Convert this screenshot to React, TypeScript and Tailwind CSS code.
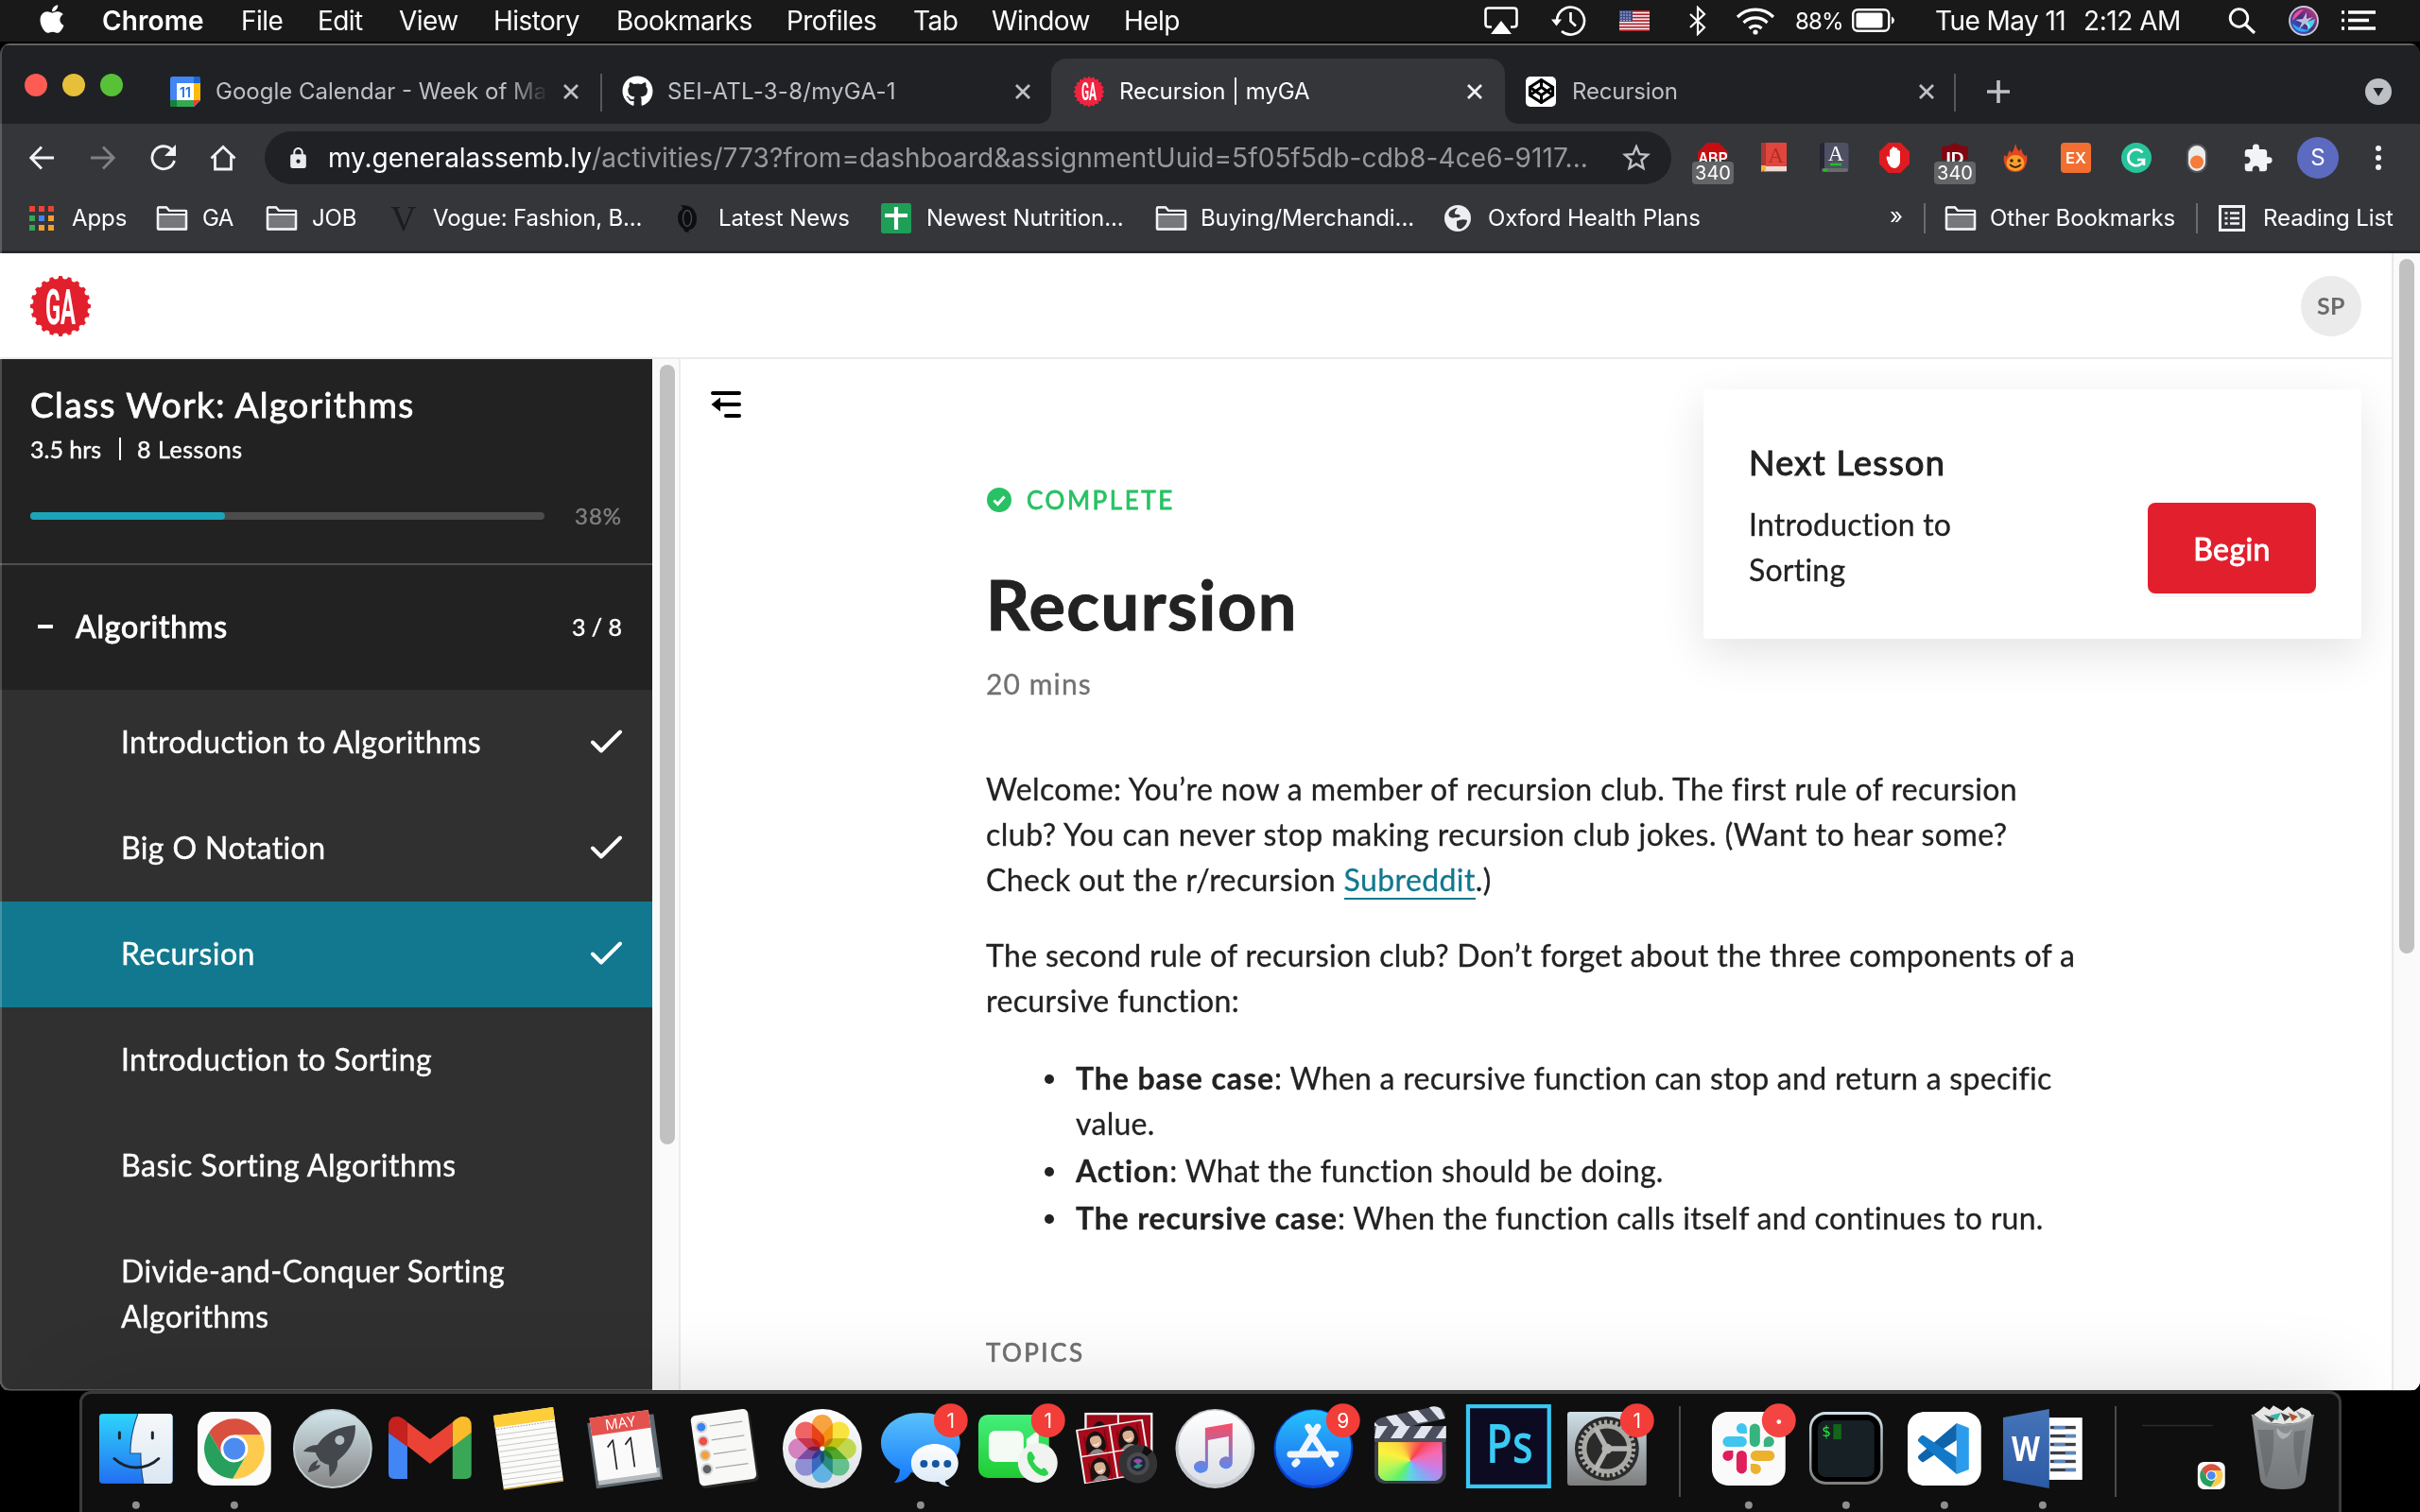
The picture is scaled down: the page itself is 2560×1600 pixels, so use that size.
import type { ReactNode } from "react";
import { FaApple, FaGithub } from "react-icons/fa";
import { MdExtension, MdStarBorder, MdLock } from "react-icons/md";
import { Codepen } from "lucide-react";

/* ---------- shared drawings ---------- */

function ChromeDisc() {
  return (
    <g>
      <path d="M-26.8-17.4A32 32 0 0 1 28.5-14.5L0-14.5L-12.6 7.25Z" fill="#d9503f" />
      <path d="M28.5-14.5A32 32 0 0 1-1.7 31.9L12.6 7.25L0-14.5Z" fill="#fdcb4e" />
      <path d="M-1.7 31.9A32 32 0 0 1-26.8-17.4L-12.6 7.25L12.6 7.25Z" fill="#26a05c" />
      <circle r="14.5" fill="#fff" />
      <circle r="11.6" fill="#4c8bf0" />
    </g>
  );
}

function GaBadge({ size, notches, bg, color }: { size: number; notches: number; bg: string; color: string }) {
  const marks = Array.from({ length: notches }, (_, i) => ((i + 0.5) * 2 * Math.PI) / notches);
  return (
    <svg width={size} height={size} viewBox="-32 -32 64 64" className="shrink-0">
      <circle r="32" fill={color} />
      {marks.map((a) => (
        <circle key={a} cx={Math.sin(a) * 32} cy={Math.cos(a) * 32} r="3" fill={bg} />
      ))}
      <text
        x="-16"
        y="18.5"
        fontFamily="Roboto"
        fontWeight="700"
        fontSize="52"
        textLength="32"
        lengthAdjust="spacingAndGlyphs"
        fill="#fff"
      >
        GA
      </text>
    </svg>
  );
}

function Folder() {
  return (
    <svg width="34" height="26" viewBox="0 0 34 26" className="shrink-0">
      <path d="M2 24V2.5Q2 1.5 3 1.5H11L14 5H31Q32 5 32 6V24Q32 24.5 31.5 24.5H2.5Q2 24.5 2 24Z" fill="#76777a" stroke="#f1f3f4" strokeWidth="2.4" />
      <path d="M2.5 2.5H11L13 5.5H31V8H2.5Z" fill="#35363a" />
      <path d="M2 9H32M2 24V2.5Q2 1.5 3 1.5H11L14 5H32V24.5H2" fill="none" stroke="#f1f3f4" strokeWidth="2.2" />
    </svg>
  );
}

function Close({ bright }: { bright?: boolean }) {
  return (
    <svg width="18" height="18" viewBox="0 0 18 18" className="shrink-0">
      <path d="M2 2L16 16M16 2L2 16" stroke={bright ? "#f1f3f4" : "#bdc1c6"} strokeWidth="2.8" />
    </svg>
  );
}

/* ---------- menu bar ---------- */

function MenuBar() {
  const t = "shrink-0 whitespace-nowrap";
  return (
    <div className="flex h-[44px] items-center bg-[#191919] pl-[38px] text-[28px] leading-[45px] tracking-[-0.02em] text-white">
      <div className="w-[70px] shrink-0">
        <FaApple size={34} className="-mt-[4px]" />
      </div>
      <div className={t + " w-[147px] font-semibold tracking-[0.004em]"}>Chrome</div>
      <div className={t + " w-[81px]"}>File</div>
      <div className={t + " w-[86px]"}>Edit</div>
      <div className={t + " w-[100px]"}>View</div>
      <div className={t + " w-[130px]"}>History</div>
      <div className={t + " w-[180px]"}>Bookmarks</div>
      <div className={t + " w-[134px]"}>Profiles</div>
      <div className={t + " w-[83px]"}>Tab</div>
      <div className={t + " w-[140px]"}>Window</div>
      <div className={t + " w-[381px]"}>Help</div>
      <svg width="36" height="30" viewBox="0 0 36 30" className="shrink-0">
        <path d="M8 21.500H4.500Q1.500 21.500 1.500 18.500V4.500Q1.500 1.500 4.500 1.500H31.500Q34.500 1.500 34.500 4.500V18.500Q34.500 21.500 31.500 21.500H28" fill="none" stroke="#fff" strokeWidth="2.600" />
        <path d="M18 15L29 29H7Z" fill="#fff" />
      </svg>
      <svg width="38" height="34" viewBox="0 0 38 34" className="ml-[34px] shrink-0">
        <path d="M7 17A14.500 14.500 0 1 1 12 28" fill="none" stroke="#fff" strokeWidth="2.600" />
        <path d="M1 15.500H12L6.500 22.500Z" fill="#fff" />
        <path d="M21.500 8V17.500L27 22.500" fill="none" stroke="#fff" strokeWidth="2.600" />
      </svg>
      <svg width="32" height="22" viewBox="0 0 32 22" className="ml-[35px] shrink-0">
        <rect width="32" height="22" fill="#f2f2f2" />
        {[0, 1, 2, 3, 4, 5, 6].map((i) => (
          <rect key={i} y={i * 3.38} width="32" height="1.7" fill="#b3202c" />
        ))}
        <rect width="14" height="12" fill="#3f4a86" />
        {[2, 5, 8, 11].map((x) =>
          [2, 5, 8, 10.5].map((y) => <circle key={x + "-" + y} cx={x} cy={y} r="0.7" fill="#e8e8f0" />)
        )}
      </svg>
      <svg width="20" height="32" viewBox="0 0 20 32" className="ml-[41px] shrink-0">
        <path d="M2 9L17 23L10 30V2L17 9L2 23" fill="none" stroke="#fff" strokeWidth="2.200" />
      </svg>
      <svg width="42" height="30" viewBox="0 0 42 30" className="ml-[30px] shrink-0">
        <path d="M2 11A27 27 0 0 1 40 11M8.500 17A18 18 0 0 1 33.500 17M14.500 23A9.500 9.500 0 0 1 27.500 23" fill="none" stroke="#fff" strokeWidth="3.200" />
        <circle cx="21" cy="27" r="2.600" fill="#fff" />
      </svg>
      <div className={t + " ml-[21px] w-[60px] text-[24px] tracking-[-0.035em]"}>88%</div>
      <svg width="46" height="26" viewBox="0 0 46 26" className="shrink-0">
        <rect x="1.200" y="1.200" width="38" height="22.600" rx="5" fill="none" stroke="#fff" strokeWidth="2.400" />
        <rect x="4.500" y="4.500" width="28" height="16" rx="2" fill="#fff" />
        <path d="M42 8.500Q45 10 45 12.500Q45 15 42 16.500Z" fill="#fff" />
      </svg>
      <div className={t + " ml-[42px] w-[157px]"}>Tue May 11</div>
      <div className={t + " w-[153px] tracking-[-0.016em]"}>2:12 AM</div>
      <svg width="30" height="28" viewBox="0 0 30 28" className="shrink-0">
        <circle cx="11.500" cy="11" r="9.300" fill="none" stroke="#fff" strokeWidth="2.800" />
        <path d="M18 17.500L28 27" stroke="#fff" strokeWidth="3.200" />
      </svg>
      <svg width="32" height="32" viewBox="-16 -16 32 32" className="ml-[34px] shrink-0">
        <defs>
          <linearGradient id="siri" x1="0" y1="1" x2="1" y2="0">
            <stop offset="0" stopColor="#2b6cf0" />
            <stop offset="0.500" stopColor="#4a2d7a" />
            <stop offset="1" stopColor="#e33b8b" />
          </linearGradient>
        </defs>
        <circle r="15" fill="url(#siri)" stroke="#c9c9d2" strokeWidth="1.800" />
        <path d="M0-12A12 12 0 0 0-12 0Q-5-6 0-12Z" fill="#e84f9d" />
        <path d="M-12 3Q-4 9 6 10A12 12 0 0 1-12 3Z" fill="#2fa6f5" />
        <path d="M4 10Q11 6 12-2L4 1Z" fill="#45d5e8" />
        <path d="M-9-1L-1-2L3-9L3-2L10-4L4 1L7 8L1 3L-5 9L-2 2Z" fill="#dff1ff" opacity="0.750" />
      </svg>
      <svg width="38" height="24" viewBox="0 0 38 24" className="ml-[23px] shrink-0">
        <path d="M1 3H4M1 11.500H4M1 20H4M8 3H37M8 11.500H30M8 20H37" stroke="#fff" strokeWidth="3.600" />
      </svg>
    </div>
  );
}

/* ---------- browser ---------- */

function TabStrip() {
  const title = "shrink-0 overflow-hidden whitespace-nowrap text-[24px] text-[#bdc1c6]";
  return (
    <div className="flex h-[83px] items-end bg-[#202124]">
      <div className="flex h-[83px] w-[178px] shrink-0 gap-[16px] pt-[30px] pl-[26px]">
        <div className="size-[24px] rounded-full bg-[#ff5b55]" />
        <div className="size-[24px] rounded-full bg-[#e6c03b]" />
        <div className="size-[24px] rounded-full bg-[#57c138]" />
      </div>

      <div className="flex h-[69px] w-[457px] shrink-0 items-center pl-[2px]">
        <svg width="32" height="32" viewBox="0 0 32 32" className="mr-[16px] shrink-0">
          <rect width="32" height="32" rx="2.500" fill="#4285f4" />
          <path d="M25 0H29.500Q32 0 32 2.500V7H25Z" fill="#1967d2" />
          <rect x="25" y="7" width="7" height="18" fill="#fbbc04" />
          <rect x="7" y="25" width="18" height="7" fill="#34a853" />
          <path d="M0 25H7V32H2.500Q0 32 0 29.500Z" fill="#188038" />
          <path d="M25 25H32L25 32Z" fill="#ea4335" />
          <path d="M32 25.500V32H25.500Z" fill="#202124" />
          <rect x="7" y="7" width="18" height="18" fill="#fff" />
          <text x="16" y="21.500" textAnchor="middle" fontFamily="Inter" fontWeight="600" fontSize="14" fill="#1a73e8">11</text>
        </svg>
        <div className={title + " w-[352px] [mask-image:linear-gradient(to_right,black_88%,transparent)]"}>
          Google Calendar - Week of May
        </div>
        <div className="ml-[15px]"><Close /></div>
      </div>
      <div className="mb-[13px] h-[40px] w-[2px] shrink-0 bg-[#55575a]" />

      <div className="flex h-[69px] w-[475px] shrink-0 items-center pl-[21px]">
        <FaGithub size={33} color="#fff" className="mr-[15px] shrink-0" />
        <div className={title + " w-[367px] tracking-[0.011em]"}>SEI-ATL-3-8/myGA-1</div>
        <Close />
      </div>

      <div className="relative flex h-[69px] w-[480px] shrink-0 items-center rounded-t-[16px] bg-[#35363a] pl-[24px]">
        <svg width="16" height="16" className="absolute bottom-0 -left-[16px]"><path d="M16 0V16H0Q16 16 16 0Z" fill="#35363a" /></svg>
        <svg width="16" height="16" className="absolute -right-[16px] bottom-0"><path d="M0 0V16H16Q0 16 0 0Z" fill="#35363a" /></svg>
        <GaBadge size={32} notches={20} bg="#35363a" color="#ee2440" />
        <div className="ml-[16px] w-[367px] shrink-0 text-[24px] tracking-[-0.003em] whitespace-nowrap text-white">Recursion | myGA</div>
        <Close bright />
      </div>

      <div className="flex h-[69px] w-[475px] shrink-0 items-center pl-[22px]">
        <div className="mr-[17px] flex size-[32px] shrink-0 items-center justify-center rounded-[5px] bg-white">
          <Codepen size={29} strokeWidth={2.5} color="#000" />
        </div>
        <div className={title + " w-[366px] tracking-[-0.006em]"}>Recursion</div>
        <Close />
      </div>
      <div className="mb-[13px] h-[40px] w-[2px] shrink-0 bg-[#55575a]" />
      <div className="flex h-[69px] items-center">
        <svg width="24" height="24" viewBox="0 0 24 24" className="ml-[33px] shrink-0">
          <path d="M12 0V24M0 12H24" stroke="#bdc1c6" strokeWidth="3.600" />
        </svg>
        <svg width="28" height="28" viewBox="0 0 28 28" className="ml-[376px] shrink-0">
          <circle cx="14" cy="14" r="14" fill="#bdc1c6" />
          <path d="M8.500 10H19.500L14 19Z" fill="#202124" />
        </svg>
      </div>
    </div>
  );
}

function Ext({ children, badge }: { children: ReactNode; badge?: string }) {
  return (
    <div className="relative flex h-[64px] w-[64px] shrink-0 items-center justify-center">
      <svg width="32" height="32" viewBox="0 0 32 32" overflow="visible">{children}</svg>
      {badge && (
        <div className="absolute top-[36px] left-[10px] h-[24px] w-[44px] rounded-[4px] bg-[#646567] text-center text-[20px] leading-[24px] text-white">
          {badge}
        </div>
      )}
    </div>
  );
}

function Toolbar() {
  return (
    <div className="flex h-[72px] items-center bg-[#35363a] pl-[31px]">
      <svg width="26" height="26" viewBox="0 0 26 26" className="shrink-0">
        <path d="M13 1.500L1.800 13L13 24.500M2 13H26" fill="none" stroke="#f1f3f4" strokeWidth="2.800" />
      </svg>
      <svg width="26" height="26" viewBox="0 0 26 26" className="ml-[39px] shrink-0">
        <path d="M13 1.500L24.200 13L13 24.500M24 13H0" fill="none" stroke="#7f8184" strokeWidth="2.800" />
      </svg>
      <svg width="28" height="28" viewBox="0 0 28 28" className="ml-[37px] shrink-0">
        <path d="M23.500 6.500A12 12 0 1 0 25.500 17" fill="none" stroke="#f1f3f4" strokeWidth="2.800" />
        <path d="M27 0V12H15Z" fill="#f1f3f4" />
      </svg>
      <svg width="28" height="28" viewBox="0 0 28 28" className="ml-[35px] shrink-0">
        <path d="M1.500 14.500L14 2.500L26.500 14.500M5.500 12V26H22.500V12" fill="none" stroke="#f1f3f4" strokeWidth="2.800" />
      </svg>
      <div className="ml-[30px] flex h-[56px] w-[1488px] shrink-0 items-center rounded-full bg-[#202124] pl-[23px]">
        <MdLock size={25} color="#e8eaed" className="mr-[19px] shrink-0" />
        <div className="w-[1366px] shrink-0 text-[28px] leading-[54px] tracking-[0.0034em] whitespace-nowrap text-[#96999c]">
          <span className="tracking-[-0.002em] text-white">my.generalassemb.ly</span>/activities/773?from=dashboard&amp;assignmentUuid=5f05f5db-cdb8-4ce6-9117...
        </div>
        <MdStarBorder size={36} color="#bdc1c6" className="shrink-0" />
      </div>
      <div className="ml-[12px] flex">
        <Ext badge="340">
          <path d="M10 0H22L32 10V18H0V10Z" fill="#c70d12" />
          <text x="16" y="22" textAnchor="middle" fontFamily="Liberation Sans" fontWeight="700" fontSize="17" textLength="31" lengthAdjust="spacingAndGlyphs" fill="#fff">ABP</text>
        </Ext>
        <Ext>
          <rect x="3" width="27" height="31" rx="1" fill="#e2453c" />
          <rect x="3" width="5" height="26" fill="#a63a34" />
          <rect x="6" y="25" width="24" height="5" fill="#f0d9d4" />
          <path d="M3 24H8V31L5.500 29L3 31Z" fill="#f4b638" />
          <text x="18.500" y="21" textAnchor="middle" fontFamily="Liberation Serif" fontSize="23" fill="#b02e28">A</text>
        </Ext>
        <Ext>
          <rect x="0.500" width="31" height="31" rx="4" fill="#4f5064" />
          <path d="M0.500 4Q0.500 0 4.500 0H6V31H4.500Q0.500 31 0.500 27Z" fill="#262733" />
          <rect x="3" y="27" width="28" height="4" rx="2" fill="#686b70" />
          <path d="M5 29H9M12 23H24" stroke="#1ec21e" strokeWidth="2.400" />
          <text x="18" y="19" textAnchor="middle" fontFamily="Liberation Serif" fontSize="23" fill="#fff">A</text>
        </Ext>
        <Ext>
          <path d="M9.500 0H22.500L32 9.500V22.500L22.500 32H9.500L0 22.500V9.500Z" fill="#e01b1f" />
          <path d="M10 22L8 16Q8 14 10 15L11.500 17V8Q12.500 6 13.800 8V14V5.500Q15 4 16.300 5.500V14V6.500Q17.600 5 18.900 6.500V15V9Q20.200 7.500 21.500 9V19Q21.500 26 16 26.500Q12 26.500 10 22Z" fill="#fff" stroke="#fff" />
        </Ext>
        <Ext badge="340">
          <path d="M16 0Q22 4 30 4V18H2V4Q10 4 16 0Z" fill="#800610" />
          <text x="16" y="22" textAnchor="middle" fontFamily="Liberation Sans" fontWeight="700" fontSize="17" textLength="19" lengthAdjust="spacingAndGlyphs" fill="#fff">ID</text>
        </Ext>
        <Ext>
          <path d="M16 1Q17 6 20 9L22 6Q23 11 26 14L28 13Q29 18 27.500 22Q25 31 16 31Q7 31 4.500 22Q3 18 4 13L7 15Q8 11 10 8L12 11Q15 7 16 1Z" fill="#e5451f" />
          <ellipse cx="16" cy="21.500" rx="9.500" ry="8.500" fill="#f9a12e" />
          <circle cx="12" cy="19" r="1.800" fill="#4a2006" />
          <circle cx="20" cy="19" r="1.800" fill="#4a2006" />
          <path d="M10 23Q16 29 22 23" fill="none" stroke="#4a2006" strokeWidth="1.800" />
        </Ext>
        <Ext>
          <rect width="32" height="32" rx="4" fill="#f26f31" />
          <text x="16" y="21.500" textAnchor="middle" fontFamily="Inter" fontWeight="600" fontSize="16.500" fill="#fff">EX</text>
        </Ext>
        <Ext>
          <circle cx="16" cy="16" r="16" fill="#27c49b" />
          <path d="M22.500 10.500A8.500 8.500 0 1 0 24 18H17M24 17.500V24" fill="none" stroke="#fff" strokeWidth="2.600" />
        </Ext>
        <Ext>
          <rect x="6" y="2" width="20" height="29" rx="10" fill="#ececec" stroke="#55565a" strokeWidth="2" />
          <circle cx="16" cy="20.500" r="7" fill="#f47c3c" />
        </Ext>
        <div className="flex w-[64px] shrink-0 items-center justify-center"><MdExtension size={33} color="#f1f3f4" /></div>
        <div className="flex w-[64px] shrink-0 items-center justify-center">
          <div className="size-[44px] rounded-full bg-[#5c6bc0] text-center text-[24px] leading-[44px] text-white">S</div>
        </div>
        <div className="flex w-[64px] shrink-0 flex-col items-center justify-center gap-[4px]">
          <div className="size-[6px] rounded-full bg-[#f1f3f4]" />
          <div className="size-[6px] rounded-full bg-[#f1f3f4]" />
          <div className="size-[6px] rounded-full bg-[#f1f3f4]" />
        </div>
      </div>
    </div>
  );
}

function Bookmarks() {
  const t = "shrink-0 whitespace-nowrap";
  const apps = ["#ea4335", "#ea4335", "#ea4335", "#34a853", "#4285f4", "#f2a02c", "#34a853", "#f2a02c", "#f2a02c"];
  return (
    <div className="flex h-[65px] items-center border-b-3 border-[#27282b] bg-[#35363a] pb-[7px] pl-[31px] text-[24px] leading-[28px] tracking-[-0.004em] text-white">
      <div className="mr-[19px] grid w-[26px] shrink-0 grid-cols-3 gap-[4px]">
        {apps.map((c, i) => (
          <div key={i} className="size-[6px]" style={{ backgroundColor: c }} />
        ))}
      </div>
      <div className={t + " w-[89px]"}>Apps</div>
      <Folder />
      <div className={t + " ml-[15px] w-[67px] tracking-[-0.03em]"}>GA</div>
      <Folder />
      <div className={t + " ml-[15px] w-[83px]"}>JOB</div>
      <div className="w-[45px] shrink-0 font-[Liberation_Serif] text-[38px] leading-[36px] text-[#1c1c1e]">V</div>
      <div className={t + " w-[258px] tracking-[-0.007em]"}>Vogue: Fashion, B...</div>
      <svg width="22" height="30" viewBox="0 0 22 30" className="shrink-0">
        <path d="M4 1Q12 1 16 4Q21 9 21 15Q21 25 14 27Q10 29 14 29.500Q8 31 7 26Q1 22 1 14Q1 9 5 6Q8 4 4 1Z" fill="#0e0e10" />
        <ellipse cx="11" cy="15" rx="4.500" ry="8.500" fill="none" stroke="#4a4b4e" strokeWidth="1.400" />
      </svg>
      <div className={t + " ml-[22px] w-[172px]"}>Latest News</div>
      <svg width="32" height="32" viewBox="0 0 32 32" className="shrink-0">
        <rect width="32" height="32" rx="2.500" fill="#1e9e57" />
        <path d="M4 13H28M16 4V28" stroke="#fff" strokeWidth="4.200" />
      </svg>
      <div className={t + " ml-[16px] w-[242px]"}>Newest Nutrition...</div>
      <Folder />
      <div className={t + " ml-[14px] w-[258px]"}>Buying/Merchandi...</div>
      <svg width="28" height="28" viewBox="0 0 28 28" className="shrink-0">
        <circle cx="14" cy="14" r="14" fill="#eceef0" />
        <path d="M14 3Q9 8 12 10Q16 9 17 12Q14 14 11 13Q9 15 5 12Q3 8 8 5Q11 3 14 3ZM13 17Q19 14 24 16Q24 21 18 25Q14 26 13 22Z" fill="#35363a" />
      </svg>
      <div className={t + " ml-[18px] w-[425px]"}>Oxford Health Plans</div>
      <div className={t + " w-[36px] pb-[4px]"}>»</div>
      <div className="mr-[20px] h-[32px] w-[2px] shrink-0 bg-[#6a6b6e]" />
      <Folder />
      <div className={t + " ml-[14px] w-[218px]"}>Other Bookmarks</div>
      <div className="mr-[22px] h-[32px] w-[2px] shrink-0 bg-[#6a6b6e]" />
      <svg width="28" height="28" viewBox="0 0 28 28" className="shrink-0">
        <rect x="1.500" y="1.500" width="25" height="25" fill="none" stroke="#f1f3f4" strokeWidth="3" />
        <path d="M6.500 8.500H9.500M6.500 14H9.500M6.500 19.500H9.500M12 8.500H22M12 14H22M12 19.500H22" stroke="#f1f3f4" strokeWidth="2.600" />
      </svg>
      <div className={t + " ml-[19px]"}>Reading List</div>
    </div>
  );
}

/* ---------- course page ---------- */

function Lesson({ children, done, active }: { children: ReactNode; done?: boolean; active?: boolean }) {
  return (
    <div className={"flex items-start justify-between pt-[31px] pr-[32px] pb-[33px] pl-[128px] " + (active ? "bg-[#11788f]" : "")}>
      <div className="text-[32px] leading-[48px] tracking-[0.0125em] whitespace-nowrap [-webkit-text-stroke:0.4px]">{children}</div>
      {done && (
        <svg width="33" height="26" viewBox="0 0 33 26" className="mt-[11px] shrink-0">
          <path d="M2 13.500L11 22.500L31 2.500" fill="none" stroke="#fff" strokeWidth="4" strokeLinecap="round" strokeLinejoin="round" />
        </svg>
      )}
    </div>
  );
}

function Sidebar() {
  return (
    <div className="w-[690px] shrink-0 bg-[#303030] text-white">
      <div className="h-[218px] border-b-2 border-[#4f4f4f] bg-[#222] pt-[24px] pl-[32px]">
        <div className="text-[37px] leading-[48px] tracking-[0.0375em] whitespace-nowrap [-webkit-text-stroke:0.8px]">Class Work: Algorithms</div>
        <div className="mt-[7px] flex h-[32px] items-center text-[25px] leading-[32px] tracking-[0.022em] whitespace-nowrap [-webkit-text-stroke:0.4px]">
          <div className="w-[94px] tracking-[0em]">3.5 hrs</div>
          <div className="mr-[17px] h-[24px] w-[2px] bg-white" />
          <div>8 Lessons</div>
        </div>
        <div className="mt-[39px] flex h-[32px] items-center">
          <div className="h-[8px] w-[544px] rounded-full bg-[#4c4c4c]">
            <div className="h-[8px] w-[206px] rounded-full bg-[#1ba5bb]" />
          </div>
          <div className="ml-[32px] text-[24px] leading-[32px] tracking-[0.04em] text-[#808080] [-webkit-text-stroke:0.4px]">38%</div>
        </div>
      </div>
      <div className="flex h-[132px] items-center bg-[#222] pr-[32px] pb-[3px] pl-[40px]">
        <div className="h-[4px] w-[16px] bg-white" />
        <div className="ml-[24px] flex-1 text-[32px] leading-[48px] tracking-[0.026em] [-webkit-text-stroke:1px]">Algorithms</div>
        <div className="text-[25px] leading-[48px] [-webkit-text-stroke:0.4px]">3 / 8</div>
      </div>
      <Lesson done>Introduction to Algorithms</Lesson>
      <Lesson done>Big O Notation</Lesson>
      <Lesson done active>Recursion</Lesson>
      <Lesson>Introduction to Sorting</Lesson>
      <Lesson>
        <span className="tracking-[0.017em]">Basic Sorting Algorithms</span>
      </Lesson>
      <Lesson>
        Divide-and-Conquer Sorting
        <br />
        Algorithms
      </Lesson>
    </div>
  );
}

function Bullet({ children }: { children: ReactNode }) {
  return (
    <li className="flex items-start">
      <div className="mt-[20px] mr-[23px] size-[10px] shrink-0 rounded-full bg-[#222]" />
      <div className="tracking-[0.009em]">{children}</div>
    </li>
  );
}

function Article() {
  return (
    <div className="relative flex flex-1 items-start bg-white text-[#222]">
      <svg width="32" height="28" viewBox="0 0 32 28" className="mt-[34px] ml-[32px] shrink-0">
        <path d="M2 2H30M8 14H30M16 26H30" stroke="#000" strokeWidth="4" strokeLinecap="round" />
        <path d="M0.500 14L10 6.500V21.500Z" fill="#000" />
      </svg>
      <div className="ml-[259px] pt-[129px] text-[32px] leading-[48px] tracking-[0.0125em] whitespace-nowrap [-webkit-text-stroke:0.3px]">
        <div className="flex h-[40px] items-center text-[#28c164]">
          <svg width="26" height="26" viewBox="0 0 26 26" className="mr-[16px] ml-[1px] shrink-0">
            <circle cx="13" cy="13" r="13" fill="#28c164" />
            <path d="M7.500 13.500L11.500 17.500L18.500 9.500" fill="none" stroke="#fff" strokeWidth="3" />
          </svg>
          <div className="text-[26px] leading-[40px] tracking-[0.098em] [-webkit-text-stroke:0.8px]">COMPLETE</div>
        </div>
        <h1 className="mt-[42px] text-[72px] leading-[96px] font-bold tracking-[0.021em] [-webkit-text-stroke:1px]">Recursion</h1>
        <div className="mt-[12px] text-[30px] tracking-[0.037em] text-[#717171]">20 mins</div>
        <p className="mt-[64px]">
          Welcome: You’re now a member of recursion club. The first rule of recursion
          <br />
          <span className="tracking-[0.0158em]">club? You can never stop making recursion club jokes. (Want to hear some?</span>
          <br />
          Check out the r/recursion{" "}
          <a className="inline-block h-[45px] border-b-2 border-[#11788f] text-[#11788f]">Subreddit</a>.)
        </p>
        <p className="mt-[32px]">
          <span className="tracking-[0.0105em]">The second rule of recursion club? Don’t forget about the three components of a</span>
          <br />
          recursive function:
        </p>
        <ul className="mt-[34px] flex flex-col gap-[2px] pl-[62px]">
          <Bullet>
            <b className="tracking-[0.029em]">The base case</b>: When a recursive function can stop and return a specific
            <br />
            value.
          </Bullet>
          <Bullet>
            <b className="tracking-[0.029em]">Action</b>: What the function should be doing.
          </Bullet>
          <Bullet>
            <b className="tracking-[0.026em]">The recursive case</b>: When the function calls itself and continues to run.
          </Bullet>
        </ul>
        <div className="mt-[98px] text-[26px] leading-[40px] tracking-[0.095em] text-[#717171] [-webkit-text-stroke:0.7px]">TOPICS</div>
      </div>

      <div className="absolute top-[32px] right-[32px] h-[264px] w-[696px] rounded-[4px] bg-white px-[48px] pt-[51px] shadow-[0_16px_48px_rgba(0,0,0,0.11)]">
        <div className="text-[36px] leading-[52px] tracking-[0.037em] [-webkit-text-stroke:1.1px]">Next Lesson</div>
        <div className="flex items-start justify-between">
          <div className="mt-[16px] text-[32px] leading-[48px] tracking-[0.007em] [-webkit-text-stroke:0.3px]">
            Introduction to
            <br />
            Sorting
          </div>
          <div className="mt-[17px] h-[96px] w-[178px] rounded-[8px] bg-[#e21f2d] text-center text-[32px] leading-[97px] tracking-[0.012em] text-white shadow-[0_4px_0_#f6f6f6] [-webkit-text-stroke:0.9px]">
            Begin
          </div>
        </div>
      </div>
    </div>
  );
}

function Page() {
  return (
    <div className="flex h-[1203px] bg-white font-[Lato]">
      <div className="flex w-[2530px] shrink-0 flex-col">
        <div className="flex h-[112px] shrink-0 items-center justify-between border-b-2 border-[#ebebeb] pt-[2px] pr-[32px] pl-[32px]">
          <GaBadge size={64} notches={20} bg="#ffffff" color="#e21f2d" />
          <div className="size-[64px] rounded-full bg-[#ebebeb] text-center text-[25px] leading-[62px] font-bold tracking-[0.02em] text-[#6b6b6b]">SP</div>
        </div>
        <div className="flex h-[1091px] overflow-hidden">
          <Sidebar />
          <div className="w-[30px] shrink-0 border-r-2 border-[#ececec] bg-[#fafafa] pt-[6px] pl-[8px]">
            <div className="h-[825px] w-[16px] rounded-full bg-[#c1c1c1]" />
          </div>
          <Article />
        </div>
      </div>
      <div className="w-[30px] shrink-0 border-l-2 border-[#e8e8e8] bg-[#fafafa] pt-[6px] pl-[6px]">
        <div className="h-[735px] w-[16px] rounded-full bg-[#c1c1c1]" />
      </div>
    </div>
  );
}

/* ---------- dock ---------- */

function DockApp({ children, badge, open }: { children: ReactNode; badge?: string; open?: boolean }) {
  return (
    <svg width="103.730" height="128" viewBox="-52 0 104 128" className="shrink-0 overflow-visible">
      {children}
      {badge && (
        <g>
          <circle cx="32" cy="30" r="18" fill="#f23d39" />
          <text x="32" y="37.500" textAnchor="middle" fontFamily="Inter" fontSize="21" fill="#fff">{badge}</text>
        </g>
      )}
      {open && <circle cx="0" cy="120" r="4" fill="#8f8f8f" />}
    </svg>
  );
}

function Gradients() {
  const g: [string, string, string][] = [
    ["gFinder", "#2dd5fb", "#236ff2"],
    ["gFace", "#f6f8fa", "#dbe7f3"],
    ["gLaunch", "#d2e6ec", "#858585"],
    ["gMsg", "#59c2fb", "#1478fb"],
    ["gSmall", "#ffffff", "#d8e8f6"],
    ["gFt", "#44ef7c", "#20cb33"],
    ["gStore", "#26c2fd", "#1c5cec"],
    ["gDisc", "#ffffff", "#dcdfe4"],
    ["gNote", "#fb4c63", "#4f8df7"],
    ["gPref", "#cfe0e8", "#7d7d7d"],
    ["gWord", "#4674b8", "#2c5aa5"],
    ["gTrash", "#8f9294", "#74777a"],
  ];
  return (
    <svg width="0" height="0" className="absolute">
      <defs>
        {g.map(([id, a, b]) => (
          <linearGradient key={id} id={id} x1="0" y1="0" x2="0" y2="1">
            <stop offset="0" stopColor={a} />
            <stop offset="1" stopColor={b} />
          </linearGradient>
        ))}
        <clipPath id="cFinder"><rect x="-39" y="23" width="78" height="74" rx="4" /></clipPath>
        <clipPath id="cClap"><rect x="-38" y="47" width="76" height="17" /></clipPath>
      </defs>
    </svg>
  );
}

function Face({ x, y }: { x: number; y: number }) {
  return (
    <g transform={`translate(${x} ${y})`}>
      <rect width="33" height="27" fill="#a80b1b" />
      <path d="M6 7V27M28 3V27" stroke="#7c0612" strokeWidth="1.500" />
      <path d="M6 25Q5 5 17 3Q28 5 27 20Q26 26 22 25Z" fill="#1b1212" />
      <ellipse cx="17" cy="13.500" rx="6" ry="7.500" fill="#dcb093" transform="rotate(-12 17 13)" />
      <path d="M8 27Q11 22 17 22Q22 22 24 27Z" fill="#8d8588" />
      <path d="M14 17Q17 19.500 20 16" fill="none" stroke="#f7ecec" strokeWidth="1.600" />
      <path d="M10 12Q13 6 23 9Q19 3 12 5Z" fill="#1b1212" />
    </g>
  );
}

function Dock() {
  const petals = ["#f7941e", "#f9e01e", "#b8d432", "#4cb97c", "#4aa8e0", "#7f7fd0", "#cf6fb5", "#ee4a4a"];
  return (
    <div className="relative ml-[84px] flex h-[130px] w-[2393px] rounded-t-[12px] border-t-3 border-r-3 border-l-3 border-[#3a3b3b] bg-[#0f0f0f] pl-[5px] shadow-[0_0_90px_rgba(0,0,0,0.150)]">
      <div className="-mt-[2px] flex">
        <Gradients />
        <DockApp open>
          <g clipPath="url(#cFinder)">
            <rect x="-39" y="23" width="78" height="74" fill="url(#gFinder)" />
            <path d="M2 23Q-6 44 -6 65H5Q5 82 8 97H39V23Z" fill="url(#gFace)" />
            <path d="M2 23Q-6 44 -6 65H5Q5 82 8 97" fill="none" stroke="#1d4f86" strokeWidth="1.200" />
          </g>
          <path d="M-17.500 43V49M17.500 43V49M-23 70.500Q-13 80 0 80Q14 80 24 70.500" fill="none" stroke="#1a2430" strokeWidth="3" strokeLinecap="round" />
        </DockApp>
        <DockApp open>
          <rect x="-39" y="21" width="78" height="78" rx="17" fill="#fbfbfb" />
          <g transform="translate(0 60)"><ChromeDisc /></g>
        </DockApp>
        <DockApp>
          <circle cx="1" cy="60" r="41" fill="url(#gLaunch)" stroke="#c2cfd4" strokeWidth="2" />
          <path d="M25 35C5 37-8 45-15 56C-22 56-27 59-30 63L-17 64L-16 67L-12 73L-7 76L-3 77L-2 90C4 85 7 79 6 73C18 63 26 52 25 35Z" fill="#44484c" />
          <circle cx="8.500" cy="51" r="5" fill="#b4c0c4" />
          <path d="M-14 72C-22 74-24 80-25 85C-18 84-12 81-12 77L-17 78Z" fill="#44484c" />
        </DockApp>
        <DockApp>
          <path d="M-44 43L-24 57V92H-38Q-44 92-44 86Z" fill="#4285f4" />
          <path d="M44 43L24 57V92H38Q44 92 44 86Z" fill="#3aa757" />
          <path d="M-24 32L0 50L24 32V57L0 76L-24 57Z" fill="#ea4335" />
          <path d="M-44 36Q-44 26-35 26Q-30 26-24 32V58L-44 43Z" fill="#c5221f" />
          <path d="M44 36Q44 26 35 26Q30 26 24 32V58L44 43Z" fill="#fbbc2c" />
        </DockApp>
        <DockApp>
          <g transform="translate(0 59) rotate(-8)">
            <rect x="-32" y="-39" width="64" height="79" fill="#fbfbfa" />
            <rect x="-32" y="-39" width="64" height="13" fill="#fdce3a" />
            <path d="M-32-24H32" stroke="#9c9c9c" strokeWidth="1" strokeDasharray="1.500 1.500" />
            {[-18, -12, -6, 0, 6, 12, 18, 24, 30, 36].map((y) => (
              <path key={y} d={`M-32 ${y}H32`} stroke="#c9c9c7" strokeWidth="1" />
            ))}
            <path d="M-32 40H32" stroke="#caa22a" strokeWidth="1.500" />
          </g>
        </DockApp>
        <DockApp>
          <g transform="translate(-4 57) rotate(-8)">
            <rect x="-34" y="-29" width="71" height="70" fill="#5f6a73" />
            <rect x="-31" y="28" width="66" height="10" fill="#b9bcbd" />
            <rect x="-31" y="-34" width="63" height="67" fill="#fafafa" />
            <rect x="-31" y="-34" width="63" height="19" fill="#e4524e" />
            <text x="0.500" y="-19" textAnchor="middle" fontFamily="Open Sans" fontSize="15.500" fill="#fff">MAY</text>
            <text x="-1" y="24" textAnchor="middle" fontFamily="Open Sans" fontWeight="300" fontSize="45" textLength="38" lengthAdjust="spacingAndGlyphs" fill="#222">11</text>
          </g>
        </DockApp>
        <DockApp>
          <g transform="translate(0 58) rotate(-8)">
            <rect x="-30" y="-35" width="62" height="76" rx="5" fill="#2a2a2a" />
            <rect x="-31" y="-37" width="61" height="75" rx="5" fill="#f8f8f7" />
            {["#3b82f0", "#ea5045", "#f2a23c", "#5d6166"].map((c, i) => (
              <g key={c}>
                <circle cx="-21" cy={-24 + i * 15} r="5.400" fill={c} stroke="#d7d7d7" strokeWidth="2" />
                <path d={`M-12 ${-24 + i * 15}H23`} stroke="#a5a5a5" strokeWidth="1.200" />
              </g>
            ))}
          </g>
        </DockApp>
        <DockApp>
          <circle cy="60" r="42" fill="url(#gDisc)" />
          <g transform="translate(0 60)" className="isolate">
            {petals.map((c, i) => (
              <rect key={c} x="-11" y="-36" width="22" height="35" rx="11" fill={c} opacity="0.850" transform={`rotate(${i * 45})`} className="mix-blend-multiply" />
            ))}
          </g>
          <circle cy="60" r="2.500" fill="#fff" />
        </DockApp>
        <DockApp badge="1" open>
          <path d="M0 22C24 22 42 36 42 54C42 73 22 86 0 86C-4 86-7 86-10 85C-14 92-20 96-28 96C-24 92-22 87-22 82C-34 76-42 66-42 54C-42 36-24 22 0 22Z" fill="url(#gMsg)" />
          <path d="M15 55C29 55 40 64 40 75C40 84 34 91 26 94C26 97 28 99 31 100C26 100 21 98 19 95C0 97-10 87-10 75C-10 64 1 55 15 55Z" fill="url(#gSmall)" />
          <circle cx="3.500" cy="76" r="4" fill="#1456a0" />
          <circle cx="16" cy="76" r="4" fill="#1456a0" />
          <circle cx="28.500" cy="76" r="4" fill="#1456a0" />
        </DockApp>
        <DockApp badge="1">
          <rect x="-42" y="24" width="75" height="67" rx="10" fill="url(#gFt)" />
          <rect x="-31" y="41" width="37" height="33" rx="7" fill="#f4faf4" />
          <path d="M9 50L18 43Q22 42 22 46V66H9Z" fill="#f4faf4" />
          <circle cx="21" cy="75" r="21" fill="#f0f3f0" />
          <path d="M10 66Q12 61 15 64L18 69Q18 72 16 73Q19 79 25 82Q27 79 29 81L32 85Q33 88 28 89Q18 88 11 75Q9 70 10 66Z" fill="#2bd24c" />
        </DockApp>
        <DockApp>
          <rect x="-32.500" y="23" width="70" height="40" fill="#9c0a19" stroke="#efefef" strokeWidth="2.400" />
          <path d="M-25 38Q-18 24-10 38Z" fill="#1b1212" />
          <path d="M2 23V40" stroke="#efefef" strokeWidth="2" />
          <g transform="translate(-43 40) rotate(-9)">
            <rect width="72" height="58" fill="#efefef" />
            <Face x={2} y={1.5} />
            <Face x={37} y={1.5} />
            <Face x={2} y={30} />
            <rect x="37" y="30" width="33" height="26.500" fill="#a80b1b" />
          </g>
          <circle cx="23" cy="76" r="20.500" fill="#333335" />
          <path d="M23 76L30 57A20 20 0 0 1 38 63Z" fill="#101012" />
          <circle cx="23" cy="76" r="12" fill="#4a4b4e" />
          <circle cx="23" cy="76" r="8" fill="#22223a" />
          <path d="M18 73Q23 68 28 73L23 77Z" fill="#8d4fa8" />
          <path d="M18 79Q23 84 28 77L23 76Z" fill="#2e8f76" />
        </DockApp>
        <DockApp>
          <circle cx="0.500" cy="60" r="42" fill="#c3c6cc" />
          <circle cx="0.500" cy="58.500" r="39" fill="url(#gDisc)" />
          <path d="M-10 38L19 33V75A7 6.500 0 1 1 15 69V47L-7 51V80A7.500 6.500 0 1 1-10 74Z" fill="url(#gNote)" />
        </DockApp>
        <DockApp badge="9">
          <circle cx="0.500" cy="60" r="42" fill="#0a3fc8" />
          <circle cx="0.500" cy="59" r="40" fill="url(#gStore)" />
          <path d="M-5 37L0 45M5 37L-13 66M-24 66H5M17 66H24M2 50L19 76M-19 76L-17 74" fill="none" stroke="#f1f6fc" strokeWidth="7" strokeLinecap="round" />
        </DockApp>
        <DockApp>
          <rect x="-38" y="47" width="76" height="50" rx="10" fill="#3b3e4c" />
          <foreignObject x="-34" y="65" width="68" height="29">
            <div className="h-[29px] w-[68px] rounded-b-[9px] bg-[conic-gradient(from_0deg_at_50%_48%,#fb8a4a,#f9414e,#f76ab0,#c77fe8,#7ab0f5,#5fd6e4,#5ff26a,#b5f75a,#fbf23d,#fdd640,#fb8a4a)]" />
          </foreignObject>
          <foreignObject x="-34" y="53" width="68" height="41">
            <div className="h-[41px] w-[68px] rounded-b-[9px] bg-[conic-gradient(from_0deg_at_50%_48%,#fb8a4a,#f9414e,#f76ab0,#c77fe8,#7ab0f5,#5fd6e4,#5ff26a,#b5f75a,#fbf23d,#fdd640,#fb8a4a)]" />
          </foreignObject>
          <g clipPath="url(#cClap)">
            <rect x="-38" y="34" width="76" height="15" fill="#4b4e5c" />
          </g>
          <path d="M-38 44V34Q-37 29-30 27L22 16Q34 14 37 23V28L-20 41H-38Z" fill="#4b4e5c" />
          <path d="M-38 32L-28 41H-38ZM-26 26L-15 24L-4 36L-15 39ZM-3 21L8 19L19 31L8 33ZM20 16Q27 14 32 17L37 28L31 29Z" fill="#e3e5ee" />
          <rect x="-38" y="36" width="76" height="17" fill="#4b4e5c" />
          {[-36, -12, 12].map((x) => (
            <path key={x} d={`M${x} 36H${x + 12}L${x + 3} 49H${x - 2 > -38 ? x - 9 : -38}V49Z`} fill="#e3e5ee" />
          ))}
          <path d="M36 36H38V49H27Z" fill="#e3e5ee" />
        </DockApp>
        <DockApp>
          <rect x="-43" y="15" width="86" height="85" fill="#0d0b22" stroke="#38c8f4" strokeWidth="4.200" />
          <text x="1" y="75" textAnchor="middle" fontFamily="Open Sans" fontWeight="600" fontSize="58" textLength="50" lengthAdjust="spacingAndGlyphs" fill="#3acbf5">Ps</text>
        </DockApp>
        <DockApp badge="1">
          <rect x="-42" y="21" width="84" height="78" rx="3" fill="url(#gPref)" />
          <circle cy="60" r="34" fill="#2b2b2b" />
          <circle cy="60" r="24" fill="none" stroke="#a9a9a6" strokeWidth="5" />
          <circle cy="60" r="28" fill="none" stroke="#a9a9a6" strokeWidth="5" strokeDasharray="3 2.860" />
          <path d="M0 60L-12 38M0 60L-12 82M0 60H25" stroke="#b4b4b1" strokeWidth="5.500" />
          <circle cy="60" r="5.500" fill="#b4b4b1" />
        </DockApp>
      </div>

      <div className="mt-[13px] mr-[20px] ml-[24px] h-[96px] w-[2px] shrink-0 bg-[#4a4a4a]" />

      <div className="-mt-[2px] flex">
        <DockApp open>
          <rect x="-39" y="21" width="78" height="78" rx="17" fill="#fafafa" />
          <g transform="translate(0 60)" strokeLinecap="round" strokeWidth="11" fill="none">
            <path d="M6.500-21V-7.500" stroke="#36b37e" />
            <path d="M21.500-7.500H21.500" stroke="#36b37e" />
            <path d="M16-7.500V-2H21.500Z" fill="#36b37e" />
            <path d="M-22-7.500H-7.500" stroke="#40c4f0" />
            <path d="M-7.500-21.500H-7.500" stroke="#40c4f0" />
            <path d="M-7.500-16H-2V-21.500Z" fill="#40c4f0" />
            <path d="M-7.500 7.500V21" stroke="#e01e5a" />
            <path d="M-22 7.500H-22" stroke="#e01e5a" />
            <path d="M-22 2H-16.500V7.500Z" fill="#e01e5a" />
            <path d="M7.500 7.500H22" stroke="#ecb22e" />
            <path d="M7.500 21.500H7.500" stroke="#ecb22e" />
            <path d="M2 21.500V16H7.500Z" fill="#ecb22e" />
          </g>
          <circle cx="32" cy="30" r="18" fill="#f54542" />
          <circle cx="32" cy="31.500" r="2.400" fill="#fff" />
        </DockApp>
        <DockApp open>
          <rect x="-39" y="21" width="78" height="77" rx="17" fill="url(#gPref)" />
          <rect x="-36.500" y="24" width="73" height="71" rx="15" fill="#000" />
          <rect x="-30" y="30" width="60" height="60" rx="8" fill="#172024" />
          <text x="-26" y="47" fontFamily="DejaVu Sans Mono" fontSize="16" fill="#26e83b">$</text>
          <rect x="-13.500" y="34" width="8.500" height="16" fill="#14651b" />
        </DockApp>
        <DockApp open>
          <rect x="-39" y="21" width="78" height="78" rx="17" fill="#fff" />
          <path d="M13 33V51L-22 74Q-24 75-27 71Q-29 69-27 67Z" fill="#0f64ab" />
          <path d="M13 87V69L-22 46Q-24 45-27 49Q-29 51-27 53Z" fill="#1278c8" />
          <path d="M13 33L26 38V82L13 87Z" fill="#2b9cec" />
        </DockApp>
        <DockApp open>
          <rect x="0" y="27" width="42" height="66" fill="#fff" />
          {[0, 1, 2, 3, 4, 5].map((i) => (
            <g key={i}>
              <path d={`M8 ${37.500 + i * 9}H35`} stroke="#3b3f45" strokeWidth="3.400" />
              <path d={i % 2 ? `M24 ${37.500 + i * 9}H35` : `M12 ${37.500 + i * 9}H24`} stroke="#5b86bd" strokeWidth="3.400" />
            </g>
          ))}
          <path d="M-42 27L7 18V102L-42 93Z" fill="url(#gWord)" />
          <text x="-18" y="73" textAnchor="middle" fontFamily="Open Sans" fontWeight="700" fontSize="36" textLength="30" lengthAdjust="spacingAndGlyphs" fill="#fff">W</text>
        </DockApp>
      </div>

      <div className="mt-[13px] mr-[20px] ml-[25px] h-[96px] w-[2px] shrink-0 bg-[#4a4a4a]" />

      <div className="-mt-[2px] flex">
        <DockApp>
          <path d="M-45 35.500H30" stroke="#2b2b2b" strokeWidth="1.600" />
          <rect x="14" y="74" width="29" height="29" rx="6.500" fill="#fafafa" />
          <g transform="translate(28.500 88.500) scale(0.380)"><ChromeDisc /></g>
        </DockApp>
        <DockApp>
          <path d="M-33 24L-24 92Q-22 103 0 103Q22 103 24 92L33 24Q20 34 0 34Q-20 34-33 24Z" fill="url(#gTrash)" />
          <path d="M-27 40L-18 92Q-8 70-10 40Z" fill="#55585b" opacity="0.450" />
          <path d="M24 40L17 90Q10 70 12 42Z" fill="#55585b" opacity="0.450" />
          <path d="M-6 38Q4 50 10 38Q8 48 0 50Q-8 46-6 38Z" fill="#c8caca" opacity="0.600" />
          <path d="M-31 24L-24 19L-20 15L-14 19L-10 14L0 20L6 15L12 21L20 16L28 20L32 26L22 32L0 34L-20 32Z" fill="#e6e6e4" />
          <path d="M-20 24L-8 28L-12 32ZM-2 22L8 26L2 31Z" fill="#444" />
          <path d="M-14 25L-2 22L-6 30Z" fill="#37b5a8" />
          <path d="M6 22L16 26L10 31Z" fill="#b0562e" />
          <path d="M14 20L24 25L20 29Z" fill="#8d9094" />
          <path d="M-33 24Q-20 35 0 35Q20 35 33 24" fill="none" stroke="#9da0a2" strokeWidth="1.800" />
        </DockApp>
      </div>
    </div>
  );
}

export default function App() {
  return (
    <div className="h-[1600px] w-[2560px] overflow-hidden bg-black font-[Inter]">
      <MenuBar />
      <div className="relative mt-[2px] h-[1426px] overflow-hidden rounded-[11px]">
        <div className="h-[2px] bg-[#626362]" />
        <TabStrip />
        <Toolbar />
        <Bookmarks />
        <Page />
        <div className="pointer-events-none absolute inset-0 rounded-[11px] border-b-2 border-l-2 border-white/20" />
      </div>
      <Dock />
    </div>
  );
}
